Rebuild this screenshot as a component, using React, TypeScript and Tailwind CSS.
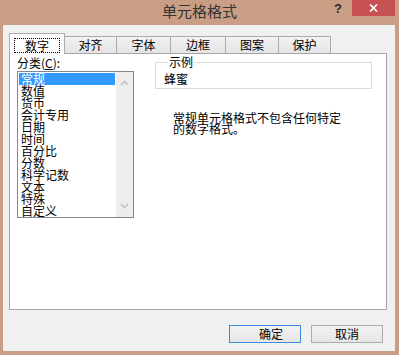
const categories = ["常规", "数值", "货币", "会计专用", "日期", "时间", "百分比", "分数", "科学记数", "文本", "特殊", "自定义"];

const tabs = [
  { label: "对齐", w: "w-[53px]" },
  { label: "字体", w: "w-[55px]" },
  { label: "边框", w: "w-[56px]" },
  { label: "图案", w: "w-[54px]" },
  { label: "保护", w: "w-[53px]" },
];

function Chevron({ up }: { up?: boolean }) {
  return (
    <svg width="9" height="6" viewBox="0 0 9 6" className="block">
      <path d={up ? "M1 5 L4.5 1.5 L8 5" : "M1 1 L4.5 4.5 L8 1"} fill="none" stroke="#c2c2c2" strokeWidth="1.6" />
    </svg>
  );
}

export default function App() {
  return (
    <div className="w-[399px] h-[355px] bg-[#c99e85] flex flex-col font-['Noto_Sans_CJK_SC',sans-serif] text-black overflow-hidden">
      {/* title bar */}
      <div className="h-[25px] flex shrink-0">
        <div className="flex-1" />
        <div className="pt-[3px] text-[15px] leading-[16px] text-[#333333] tracking-[0px]">单元格格式</div>
        <div className="flex-1 flex justify-end items-start">
          <span className="mt-[2px] mr-[10px] text-[13px] leading-[13px] font-bold text-[#2a2a2a] font-['Liberation_Sans',sans-serif]">?</span>
          <div className="w-[43px] h-[16px] mr-[4px] bg-[#c75050] flex items-center justify-center">
            <svg width="9" height="8" viewBox="0 0 9 8">
              <path d="M1 0.5 L8 7.5 M8 0.5 L1 7.5" stroke="#ffffff" strokeWidth="1.7" />
            </svg>
          </div>
        </div>
      </div>

      {/* body */}
      <div className="ml-[3px] mr-[4px] h-[326px] bg-[#f0f0f0] flex flex-col px-[6px] pt-[8px] text-[12px] leading-[12px]">
        {/* tabs */}
        <div className="h-[20px] flex items-end">
          <div className="relative z-10 -mb-px w-[56px] h-[21px] bg-white border border-b-0 border-[#acacac] flex items-center justify-center pt-[2px]">
            <span className="px-[3px] py-[1px] border border-dotted border-black leading-[11px] w-[46px] text-center">数字</span>
          </div>
          {tabs.map((t) => (
            <div
              key={t.label}
              className={`${t.w} -ml-px h-[17px] border border-b-0 border-[#acacac] bg-gradient-to-b from-[#f2f2f2] to-[#e4e4e4] flex items-center justify-center`}
            >
              {t.label}
            </div>
          ))}
        </div>

        {/* panel */}
        <div className="w-[378px] h-[257px] bg-white border border-[#a5a5a5] flex px-[7px]">
          <div className="w-[117px] flex flex-col">
            <div className="mt-[3px] h-[12px]">
              分类(<span className="underline">C</span>):
            </div>
            <div className="mt-[2px] h-[147px] border border-[#828790] flex">
              <div className="flex-1 p-px flex flex-col">
                {categories.map((c, i) => (
                  <div
                    key={c}
                    className={`h-[12px] pl-[2px] whitespace-nowrap ${i === 0 ? "bg-[#3399ff] text-white" : ""}`}
                  >
                    {c}
                  </div>
                ))}
              </div>
              <div className="w-[17px] bg-[#ededed] flex flex-col items-center justify-between py-[8px]">
                <Chevron up />
                <Chevron />
              </div>
            </div>
          </div>

          <div className="ml-[21px] flex flex-col">
            <fieldset className="mt-[2px] w-[217px] h-[33px] border border-[#dcdcdc] pl-[8px]">
              <legend className="ml-[4px] px-[1px] leading-[12px]">示例</legend>
              <div className="mt-[5px]">蜂蜜</div>
            </fieldset>
            <div className="mt-[23px] ml-[18px] leading-[11px]">
              <div>常规单元格格式不包含任何特定</div>
              <div>的数字格式。</div>
            </div>
          </div>
        </div>

        {/* buttons */}
        <div className="mt-[15px] flex justify-end gap-[10px] pr-[6px]">
          <button className="w-[72px] h-[18px] border border-[#3c8ce6] bg-gradient-to-b from-[#f2f2f2] to-[#e5e5e5] leading-[12px] pl-[12px]">确定</button>
          <button className="w-[72px] h-[18px] border border-[#acacac] bg-gradient-to-b from-[#f2f2f2] to-[#e5e5e5] leading-[12px]">取消</button>
        </div>
      </div>
    </div>
  );
}
